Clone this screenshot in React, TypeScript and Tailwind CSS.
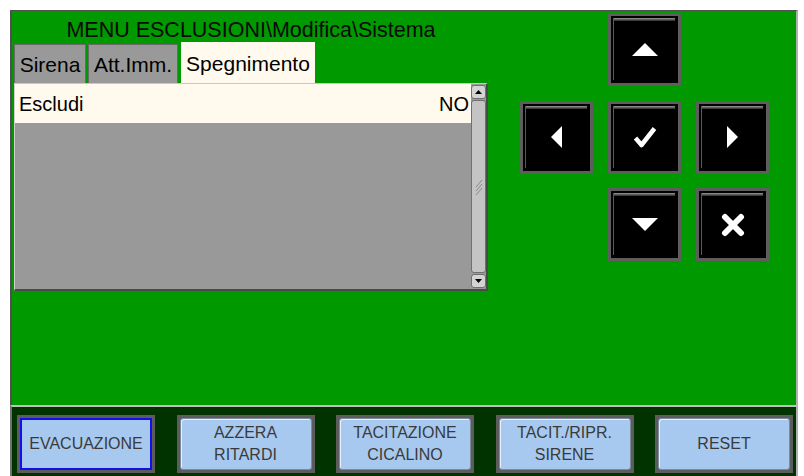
import React from 'react';

const font = { fontFamily: '"Liberation Sans", Arial, sans-serif' };

function NavButton({ children }: { children?: React.ReactNode }) {
    return (
        <div className="relative flex h-[73px] w-[73px] items-center justify-center border-[3px] border-[#5e5e5e] bg-black">
            <div className="absolute left-[2px] right-[3px] top-[2px] h-[3px] bg-gradient-to-b from-[#9a9a9a] to-[#2a2a2a]" />
            <div className="absolute bottom-[3px] left-[2px] top-[2px] w-px bg-[#5a5a5a]" />
            {children}
        </div>
    );
}

function BottomButton({ lines, active }: { lines: string[]; active?: boolean }) {
    return (
        <div className="h-[58px] w-[138px] bg-[#5c5c5c] p-[3px]">
            <div
                className={
                    active
                        ? 'flex h-full w-full flex-col items-center justify-center border-2 border-[#1010e8] bg-[#a7c9ef] text-[16px] leading-[22px] text-[#3a3a3a]'
                        : 'flex h-full w-full flex-col items-center justify-center rounded-[3px] border border-[#7d8a98] bg-[#a7c9ef] text-[16px] leading-[22px] text-[#3a3a3a] shadow-[inset_1px_1px_0_#e6f0ff]'
                }
            >
                {lines.map((l) => (
                    <span key={l}>{l}</span>
                ))}
            </div>
        </div>
    );
}

export default function App() {
    return (
        <div className="flex h-[476px] w-[804px] flex-col bg-white pl-[10px] pr-[6px] pt-[10px]" style={font}>
            {/* main panel */}
            <div className="flex h-[395px] border-l-2 border-r-2 border-t border-l-[#505050] border-r-[#b0b0b0] border-t-[#505050] bg-[#009900]">
                <div className="ml-[2px] flex w-[474px] flex-col">
                    <div className="flex h-[31px] items-end justify-center text-[21.5px] leading-[24px] text-[#0a0a0a]">
                        MENU ESCLUSIONI\Modifica\Sistema
                    </div>
                    {/* tabs */}
                    <div className="flex h-[41px] items-end gap-[2px] text-[21px] leading-none text-black">
                        <div className="flex h-[39px] w-[72px] items-center justify-center border border-b-0 border-[#6a6a6a] bg-[#999999]">
                            Sirena
                        </div>
                        <div className="flex h-[39px] w-[90px] items-center justify-center border border-b-0 border-[#6a6a6a] bg-[#999999]">
                            Att.Imm.
                        </div>
                        <div className="ml-px flex h-[41px] w-[134px] items-center justify-center bg-[#fff9ee] pt-[2px]">
                            Spegnimento
                        </div>
                    </div>
                    {/* list */}
                    <div className="flex h-[208px] border-b-2 border-l border-r-2 border-t border-b-[#4a4a4a] border-l-[#d0d0d0] border-r-[#4a4a4a] border-t-[#c8c8c8] bg-[#999999]">
                        <div className="flex-1">
                            <div className="flex h-[39px] items-center justify-between bg-[#fff9ee] pl-[4px] pr-[2px] text-[20px] text-black">
                                <span>Escludi</span>
                                <span>NO</span>
                            </div>
                        </div>
                        <div className="flex w-[15px] flex-col gap-[1px] py-[1px]">
                            <div className="flex h-[14px] items-center justify-center rounded-[3px] border border-[#707070] bg-[#d4d4d4]">
                                <svg width="7" height="4" viewBox="0 0 7 4">
                                    <path d="M0 4 L3.5 0 L7 4 Z" fill="#000" />
                                </svg>
                            </div>
                            <div className="flex flex-1 items-center justify-center rounded-[3px] border border-[#707070] bg-[#c4c4c4]">
                                <svg width="8" height="18" viewBox="0 0 8 18">
                                    <path d="M1 9 L7 2 M1 13 L7 6 M1 17 L7 10" stroke="#8a8a8a" strokeWidth="1" />
                                </svg>
                            </div>
                            <div className="flex h-[14px] items-center justify-center rounded-[3px] border border-[#707070] bg-[#d4d4d4]">
                                <svg width="7" height="4" viewBox="0 0 7 4">
                                    <path d="M0 0 L3.5 4 L7 0 Z" fill="#000" />
                                </svg>
                            </div>
                        </div>
                    </div>
                </div>
                {/* navigation keypad */}
                <div className="ml-[32px] mt-[2px] grid grid-cols-[73px_73px_73px] grid-rows-[73px_73px_73px] gap-x-[15px] gap-y-[14.5px] self-start">
                    <div />
                    <NavButton>
                        <svg width="26" height="13" viewBox="0 0 26 13">
                            <path d="M13 0 L26 13 L0 13 Z" fill="#fff" />
                        </svg>
                    </NavButton>
                    <div />
                    <NavButton>
                        <svg width="11" height="22" viewBox="0 0 11 22">
                            <path d="M11 0 L11 22 L0 11 Z" fill="#fff" />
                        </svg>
                    </NavButton>
                    <NavButton>
                        <svg width="24" height="22" viewBox="0 0 24 22">
                            <path d="M2.5 12 L8.5 19 L21.5 2.5" fill="none" stroke="#fff" strokeWidth="4.5" strokeLinejoin="round" />
                        </svg>
                    </NavButton>
                    <NavButton>
                        <svg width="11" height="22" viewBox="0 0 11 22">
                            <path d="M0 0 L11 11 L0 22 Z" fill="#fff" />
                        </svg>
                    </NavButton>
                    <div />
                    <NavButton>
                        <svg width="26" height="13" viewBox="0 0 26 13">
                            <path d="M0 0 L26 0 L13 13 Z" fill="#fff" />
                        </svg>
                    </NavButton>
                    <NavButton>
                        <svg width="24" height="24" viewBox="0 0 24 24">
                            <path d="M4 4 L20 20 M20 4 L4 20" stroke="#fff" strokeWidth="6" strokeLinecap="round" />
                        </svg>
                    </NavButton>
                </div>
            </div>
            {/* bottom command bar */}
            <div className="flex h-[71px] items-start justify-between border-l-2 border-r-2 border-t-2 border-l-[#707070] border-r-[#b0b0b0] border-t-[#c0c0c0] bg-[#003300] pl-[5px] pr-[3px] pt-[8px]">
                <BottomButton lines={['EVACUAZIONE']} active />
                <BottomButton lines={['AZZERA', 'RITARDI']} />
                <BottomButton lines={['TACITAZIONE', 'CICALINO']} />
                <BottomButton lines={['TACIT./RIPR.', 'SIRENE']} />
                <BottomButton lines={['RESET']} />
            </div>
        </div>
    );
}
